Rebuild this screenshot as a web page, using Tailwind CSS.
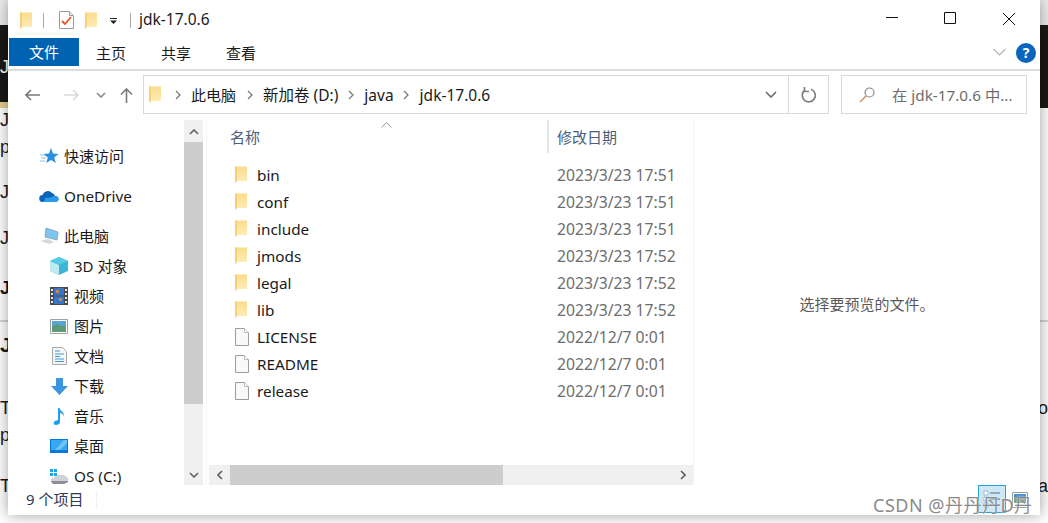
<!DOCTYPE html>
<html lang="zh">
<head>
<meta charset="utf-8">
<title>jdk-17.0.6</title>
<script src="https://cdn.jsdelivr.net/npm/@tailwindcss/browser@4"></script>
</head>
<body class="m-0 overflow-hidden bg-white">
<svg class="absolute h-0 w-0" aria-hidden="true">
  <defs>
    <linearGradient id="fg" x1="0" y1="0" x2="0" y2="1"><stop offset="0" stop-color="#fbdc8c"/><stop offset="1" stop-color="#feeebb"/></linearGradient>
    <symbol id="folder" viewBox="0 0 12 17"><path d="M0 .500h12V15H2l-2 2z" fill="url(#fg)"/><path d="M0 .500h2V15l-2 2z" fill="#f7cf74"/></symbol>
    <symbol id="page" viewBox="0 0 14 18"><path d="M.500.500h9l4 4v13H.500z" fill="#f8f9fb" stroke="#9c9c9c"/><path d="M9.500.500v4h4" fill="#fff" stroke="#bbb"/></symbol>
    <symbol id="crumb" viewBox="0 0 6 10"><path d="M1 1l4 4-4 4" fill="none" stroke="#7a7a7a" stroke-width="1.300"/></symbol>
  </defs>
</svg>
<div class="relative h-[523px] w-[1048px] overflow-hidden bg-white font-['Liberation_Sans',sans-serif] text-[18px] leading-[24px] text-[#1a1a1a]">

  <!-- page behind the window -->
  <div class="flex flex-col">
    <div class="h-[25px] bg-[#ededed]"></div>
    <div class="flex h-[77px] items-center bg-[#1b1916] pt-[7px] text-white">J</div>
    <div class="flex h-[6px] justify-between"><div class="w-[10px] bg-[#e8cf8e]"></div><div class="w-[10px] bg-[#1b1916]"></div></div>
    <div class="h-[24px]">J</div>
    <div class="mt-[3px] h-[24px]">p</div>
    <div class="mt-[21px] h-[24px]">J</div>
    <div class="mt-[22px] h-[24px]">J</div>
    <div class="mt-[26px] h-[24px] font-bold">J</div>
    <div class="mt-[20px] h-[2px] bg-[#d4d4d4]"></div>
    <div class="mt-[11px] h-[24px] text-[21px] font-bold">J</div>
    <div class="mt-[39px] flex h-[24px] justify-between"><span>T</span><span>o</span></div>
    <div class="mt-[3px] h-[24px]">p</div>
    <div class="mt-[27px] flex h-[24px] justify-between"><span>T</span><span>a</span></div>
  </div>

  <!-- explorer window -->
  <div class="absolute left-[8px] top-0 flex h-[515px] w-[1032px] flex-col bg-white font-['Noto_Sans','Noto_Sans_CJK_SC',sans-serif] text-[15px] leading-[20px] text-[#1a1a1a] shadow-[0_0_14px_rgba(0,0,0,0.38)]">

    <!-- title bar -->
    <div class="flex h-[38px] shrink-0 items-center">
      <svg class="ml-[12px] mt-[2px] shrink-0" width="12" height="17"><use href="#folder"/></svg>
      <div class="ml-[11px] mt-[2px] h-[15px] w-px bg-[#a8a8a8]"></div>
      <svg class="ml-[15px] mt-[2px]" width="15" height="18" viewBox="0 0 15 18"><path d="M.500.500h10l4 4v13H.500z" fill="#fff" stroke="#9a9a9a"/><path d="M10.500.500v4h4" fill="#eee" stroke="#9a9a9a"/><path d="M3 10l3 3 6-7" fill="none" stroke="#e2561c" stroke-width="1.800"/></svg>
      <svg class="ml-[11px] mt-[2px] shrink-0" width="12" height="17"><use href="#folder"/></svg>
      <svg class="ml-[13px] mt-[3px]" width="7" height="6" viewBox="0 0 7 6"><path d="M0 0h7v1H0zM0 2.500h7L3.500 6z" fill="#222"/></svg>
      <div class="ml-[13px] mt-[2px] h-[15px] w-px bg-[#a8a8a8]"></div>
      <span class="ml-[8px] text-[15.500px]">jdk-17.0.6</span>
      <svg class="ml-auto mt-[-3px]" width="12" height="2" viewBox="0 0 12 2"><path d="M0 .500h12" stroke="#111"/></svg>
      <svg class="ml-[46px] mt-[-2px]" width="12" height="12" viewBox="0 0 12 12"><path d="M.500.500h11v11H.500z" fill="none" stroke="#111"/></svg>
      <svg class="ml-[47px] mr-[25px] mt-[-1px]" width="12" height="12" viewBox="0 0 12 12"><path d="M0 0l12 12M12 0L0 12" stroke="#111"/></svg>
    </div>

    <!-- ribbon tabs -->
    <div class="flex h-[33px] shrink-0 items-start border-b-2 border-[#dcdcdc]">
      <div class="ml-px flex h-[28px] w-[70px] items-center justify-center bg-[#0063b1] text-white">文件</div>
      <span class="ml-[17px] mt-[5px]">主页</span>
      <span class="ml-[35px] mt-[5px]">共享</span>
      <span class="ml-[35px] mt-[5px]">查看</span>
      <svg class="ml-auto mt-[10px]" width="13" height="8" viewBox="0 0 13 8"><path d="M.500 1l6 6 6-6" fill="none" stroke="#b4b4b4" stroke-width="1.200"/></svg>
      <div class="ml-[10px] mr-[4px] mt-[5px] flex h-[20px] w-[20px] items-center justify-center rounded-full bg-[#0a66bd] text-[14px] font-bold text-white">?</div>
    </div>

    <!-- address row -->
    <div class="flex h-[49px] shrink-0 items-start pt-[4px]">
      <svg class="ml-[17px] mt-[14px]" width="15" height="12" viewBox="0 0 15 12"><path d="M6 1L1 6l5 5M1 6h14" fill="none" stroke="#7a7a7a" stroke-width="1.600"/></svg>
      <svg class="ml-[24px] mt-[14px]" width="15" height="12" viewBox="0 0 15 12"><path d="M9 1l5 5-5 5M14 6H0" fill="none" stroke="#dcdcdc" stroke-width="1.600"/></svg>
      <svg class="ml-[17px] mt-[17px]" width="10" height="6" viewBox="0 0 10 6"><path d="M1 1l4 4 4-4" fill="none" stroke="#8a8a8a" stroke-width="1.600"/></svg>
      <svg class="ml-[14px] mt-[13px]" width="13" height="15" viewBox="0 0 13 15"><path d="M1 6.500l5.500-5.500 5.500 5.500M6.500 1.500V15" fill="none" stroke="#7a7a7a" stroke-width="1.600"/></svg>
      <div class="ml-[10px] flex h-[39px] w-[646px] items-center border border-[#d9d9d9]">
        <svg class="ml-[5px] shrink-0" width="12" height="17"><use href="#folder"/></svg>
        <svg class="ml-[14px]" width="6" height="10"><use href="#crumb"/></svg>
        <span class="ml-[10px]">此电脑</span>
        <svg class="ml-[11px]" width="6" height="10"><use href="#crumb"/></svg>
        <span class="ml-[10px] text-[15.500px]">新加卷 (D:)</span>
        <svg class="ml-[10px]" width="6" height="10"><use href="#crumb"/></svg>
        <span class="ml-[10px] text-[15.500px]">java</span>
        <svg class="ml-[9px]" width="6" height="10"><use href="#crumb"/></svg>
        <span class="ml-[11px] text-[15.500px]">jdk-17.0.6</span>
        <svg class="ml-auto mr-[11px]" width="12" height="7" viewBox="0 0 12 7"><path d="M1 1l5 5 5-5" fill="none" stroke="#6a6a6a" stroke-width="1.600"/></svg>
      </div>
      <div class="flex h-[39px] w-[40px] items-center justify-center border border-l-0 border-[#d9d9d9]">
        <svg width="16" height="16" viewBox="0 0 16 16"><path d="M10 2.200A6.500 6.500 0 1 1 4 3" fill="none" stroke="#808080" stroke-width="1.700"/><path d="M3.500 0v5H8" fill="none" stroke="#808080" stroke-width="1.700" transform="translate(0 -.5)"/></svg>
      </div>
      <div class="ml-[12px] flex h-[39px] w-[186px] items-center border border-[#d9d9d9] text-[#6d6d6d]">
        <svg class="ml-[17px]" width="16" height="16" viewBox="0 0 16 16"><circle cx="10.500" cy="5.500" r="4.500" fill="none" stroke="#8a8a8a" stroke-width="1.200"/><path d="M7 9l-6 6" stroke="#c08a5a" stroke-width="1.200"/></svg>
        <span class="ml-[17px] whitespace-nowrap text-[15.300px]">在 jdk-17.0.6 中...</span>
      </div>
    </div>

    <!-- panes -->
    <div class="flex h-[365px] shrink-0">
      <!-- navigation -->
      <div class="flex w-[176px] flex-col overflow-hidden pt-[21px] [&>div]:shrink-0">
        <div class="flex h-[30px] items-center pl-[32px]">
          <svg width="19" height="16" viewBox="0 0 19 16"><path d="M11 0l2 5.500 5.500.5-4.300 3.500 1.600 5.500L11 12l-4.800 3 1.600-5.500L3.500 6 9 5.500z" fill="#2a8fe0"/><path d="M0 7h5M1 10h5M0 13h5" stroke="#8cc4ee"/></svg>
          <span class="ml-[5px]">快速访问</span>
        </div>
        <div class="mt-[10px] flex h-[30px] items-center pl-[31px]">
          <svg width="20" height="14" viewBox="0 0 20 14"><path d="M4 13a3.500 3.500 0 0 1-.5-7A5.500 5.500 0 0 1 13 4a4 4 0 0 1 3 3 3 3 0 0 1 .5 6z" fill="#0a64b8"/><path d="M4 13h13a3 3 0 0 0 2-5l-4-1-5 2-3-.5z" fill="#2a9be8"/></svg>
          <span class="ml-[5px] text-[15.300px]">OneDrive</span>
        </div>
        <div class="mt-[10px] flex h-[30px] items-center pl-[32px]">
          <svg width="19" height="18" viewBox="0 0 19 18"><path d="M6 1l12 4-1 8-12-3z" fill="#7cc4f2" stroke="#8a9aa8" stroke-width=".8"/><path d="M0 14l8-2 6 3-5 2z" fill="#d6d9dc"/></svg>
          <span class="ml-[5px]">此电脑</span>
        </div>
        <div class="flex h-[30px] items-center pl-[42px]">
          <svg width="18" height="18" viewBox="0 0 18 18"><path d="M9 0l9 4v10l-9 4-9-4V4z" fill="#3bb7d6"/><path d="M0 4l9 4v10l-9-4z" fill="#bfeaf2"/><path d="M9 0l9 4-9 4-9-4z" fill="#58cbe4"/></svg>
          <span class="ml-[6px]">3D 对象</span>
        </div>
        <div class="flex h-[30px] items-center pl-[42px]">
          <svg width="18" height="18" viewBox="0 0 18 18"><path d="M0 0h18v18H0z" fill="#4a4a4a"/><path d="M4 1h10v7.500H4z" fill="#3a76c8"/><path d="M4 9.500h10V17H4z" fill="#3a76c8"/><path d="M6 3h3v3H6zM9 11h3v3H9z" fill="#d9843a"/><path d="M1 2h2v2H1zM1 6h2v2H1zM1 10h2v2H1zM1 14h2v2H1zM15 2h2v2h-2zM15 6h2v2h-2zM15 10h2v2h-2zM15 14h2v2h-2z" fill="#e6e6e6"/></svg>
          <span class="ml-[6px]">视频</span>
        </div>
        <div class="flex h-[30px] items-center pl-[42px]">
          <svg width="18" height="15" viewBox="0 0 18 15"><path d="M.500.500h17v14H.500z" fill="#fff" stroke="#a0a0a0"/><path d="M2 2h14v6H2z" fill="#5aa5d8"/><path d="M2 7l5-2 4 2 5-1v7H2z" fill="#5f9a78"/></svg>
          <span class="ml-[6px]">图片</span>
        </div>
        <div class="flex h-[30px] items-center pl-[44px]">
          <svg width="15" height="18" viewBox="0 0 15 18"><path d="M.500.500h10l4 4v13H.500z" fill="#f6f6f6" stroke="#a8a8a8"/><path d="M3 4h5M3 7h9M3 9.500h5M3 12h9M3 14.500h9" stroke="#3f9ae0"/></svg>
          <span class="ml-[7px]">文档</span>
        </div>
        <div class="flex h-[30px] items-center pl-[43px]">
          <svg width="17" height="17" viewBox="0 0 17 17"><path d="M5 0h7v8h5l-8.500 9L0 8h5z" fill="#3c93e0"/></svg>
          <span class="ml-[6px]">下载</span>
        </div>
        <div class="flex h-[30px] items-center pl-[45px]">
          <svg width="12" height="17" viewBox="0 0 12 17"><path d="M5 0h1.500c.5 3 5 4 4.500 8-1-2-3-3-4-3v9c0 2-2 3-4 3s-3-2-2-3 3-2 4-1.500z" fill="#1e9cf0"/></svg>
          <span class="ml-[9px]">音乐</span>
        </div>
        <div class="flex h-[30px] items-center pl-[42px]">
          <svg width="18" height="14" viewBox="0 0 18 14"><path d="M0 0h18v14H0z" fill="#0a78d4"/><path d="M1 1h16v10H1z" fill="#34a8f0"/><path d="M5 11l9-10h3v3l-7 7z" fill="#6cc4f6"/></svg>
          <span class="ml-[6px]">桌面</span>
        </div>
        <div class="flex h-[30px] items-center pl-[41px]">
          <svg width="20" height="16" viewBox="0 0 20 16"><path d="M1 1h3v3H1zM5 1h3v3H5zM1 5h3v3H1zM5 5h3v3H5z" fill="#16a5ec"/><path d="M2 11l7-4h6l4 3v4l-4 2H4l-2-2z" fill="#cfd2d4"/><path d="M2 13h17v1l-4 2H4z" fill="#8c9094"/></svg>
          <span class="ml-[5px] text-[15.300px]">OS (C:)</span>
        </div>
      </div>
      <!-- nav scrollbar -->
      <div class="flex w-[19px] flex-col items-center bg-[#f0f0f0] pt-px">
        <div class="flex h-[21px] items-center"><svg width="10" height="6" viewBox="0 0 10 6"><path d="M1 5l4-4 4 4" fill="none" stroke="#606060" stroke-width="1.600"/></svg></div>
        <div class="h-[262px] w-full bg-[#cdcdcd]"></div>
        <div class="mt-auto flex h-[21px] items-center"><svg width="10" height="6" viewBox="0 0 10 6"><path d="M1 1l4 4 4-4" fill="none" stroke="#606060" stroke-width="1.600"/></svg></div>
      </div>
      <!-- file list -->
      <div class="relative ml-[3px] flex w-[488px] flex-col border-x border-[#f3f3f3]">
        <svg class="absolute left-[174px] top-[2px]" width="11" height="6" viewBox="0 0 11 6"><path d="M.500 5.500l5-5 5 5" fill="none" stroke="#9a9a9a"/></svg>
        <div class="flex h-[33px] items-center text-[#4c607a]">
          <span class="w-[340px] pl-[23px]">名称</span>
          <span class="flex h-full items-center border-l-2 border-[#e6e6e6] pl-[8px]">修改日期</span>
        </div>
        <div class="mt-[8px] flex flex-col">
          <div class="flex h-[27px] items-center"><svg class="ml-[28px] shrink-0" width="12" height="17"><use href="#folder"/></svg><span class="ml-[10px] w-[300px] text-[15.300px]">bin</span><span class="text-[15.700px] text-[#6d6d6d]">2023/3/23 17:51</span></div>
          <div class="flex h-[27px] items-center"><svg class="ml-[28px] shrink-0" width="12" height="17"><use href="#folder"/></svg><span class="ml-[10px] w-[300px] text-[15.300px]">conf</span><span class="text-[15.700px] text-[#6d6d6d]">2023/3/23 17:51</span></div>
          <div class="flex h-[27px] items-center"><svg class="ml-[28px] shrink-0" width="12" height="17"><use href="#folder"/></svg><span class="ml-[10px] w-[300px] text-[15.300px]">include</span><span class="text-[15.700px] text-[#6d6d6d]">2023/3/23 17:51</span></div>
          <div class="flex h-[27px] items-center"><svg class="ml-[28px] shrink-0" width="12" height="17"><use href="#folder"/></svg><span class="ml-[10px] w-[300px] text-[15.300px]">jmods</span><span class="text-[15.700px] text-[#6d6d6d]">2023/3/23 17:52</span></div>
          <div class="flex h-[27px] items-center"><svg class="ml-[28px] shrink-0" width="12" height="17"><use href="#folder"/></svg><span class="ml-[10px] w-[300px] text-[15.300px]">legal</span><span class="text-[15.700px] text-[#6d6d6d]">2023/3/23 17:52</span></div>
          <div class="flex h-[27px] items-center"><svg class="ml-[28px] shrink-0" width="12" height="17"><use href="#folder"/></svg><span class="ml-[10px] w-[300px] text-[15.300px]">lib</span><span class="text-[15.700px] text-[#6d6d6d]">2023/3/23 17:52</span></div>
          <div class="flex h-[27px] items-center"><svg class="ml-[28px] shrink-0" width="14" height="18"><use href="#page"/></svg><span class="ml-[8px] w-[300px] text-[15.300px]">LICENSE</span><span class="text-[15.700px] text-[#6d6d6d]">2022/12/7 0:01</span></div>
          <div class="flex h-[27px] items-center"><svg class="ml-[28px] shrink-0" width="14" height="18"><use href="#page"/></svg><span class="ml-[8px] w-[300px] text-[15.300px]">README</span><span class="text-[15.700px] text-[#6d6d6d]">2022/12/7 0:01</span></div>
          <div class="flex h-[27px] items-center"><svg class="ml-[28px] shrink-0" width="14" height="18"><use href="#page"/></svg><span class="ml-[8px] w-[300px] text-[15.300px]">release</span><span class="text-[15.700px] text-[#6d6d6d]">2022/12/7 0:01</span></div>
        </div>
        <div class="ml-[2px] mt-auto flex h-[20px] items-center bg-[#f0f0f0]">
          <div class="flex w-[21px] justify-center"><svg width="6" height="10" viewBox="0 0 6 10"><path d="M5 1L1 5l4 4" fill="none" stroke="#606060" stroke-width="1.600"/></svg></div>
          <div class="h-full w-[273px] bg-[#cdcdcd]"></div>
          <svg class="ml-auto mr-[7px]" width="6" height="10" viewBox="0 0 6 10"><path d="M1 1l4 4-4 4" fill="none" stroke="#606060" stroke-width="1.600"/></svg>
        </div>
      </div>
      <!-- preview -->
      <div class="flex flex-1 items-center justify-center pt-[3px] text-[#5a5a5a]">选择要预览的文件。</div>
    </div>

    <!-- status bar -->
    <div class="flex h-[30px] shrink-0 items-start">
      <span class="ml-[18px] mt-[4px] w-[70px] text-[#2b3a55]">9 个项目</span>
      <div class="mt-[6px] h-[18px] w-px bg-[#f0f0f0]"></div>
      <div class="ml-auto flex h-[28px] w-[28px] items-center justify-center border border-[#2a9fd8] bg-[#cce8f7]">
        <svg width="18" height="18" viewBox="0 0 18 18"><path d="M1 1h4v4H1zM1 7h4v4H1zM1 13h4v4H1z" fill="#fff" stroke="#8aa0b8" stroke-width=".7"/><path d="M7 3h10M7 9h10M7 15h10" stroke="#5a6a7a"/></svg>
      </div>
      <div class="ml-[6px] mr-[12px] mt-[7px] flex h-[16px] w-[16px] items-center">
        <svg width="16" height="16" viewBox="0 0 16 16"><path d="M.500.500h15v15H.500z" fill="#fff" stroke="#9a9a9a"/><path d="M2 2h12v3H2z" fill="#4a90d8"/><path d="M2 5h12v6H2z" fill="#7aa48c"/></svg>
      </div>
    </div>
  </div>

  <!-- watermark -->
  <div class="absolute left-[873px] top-[493px] whitespace-nowrap font-['Noto_Sans','Noto_Sans_CJK_SC',sans-serif] text-[18px] leading-[24px] tracking-[0.5px] text-[#8a8a8a] [text-shadow:0_0_2px_#fff]">CSDN @丹丹丹D丹</div>
</div>
</body>
</html>
